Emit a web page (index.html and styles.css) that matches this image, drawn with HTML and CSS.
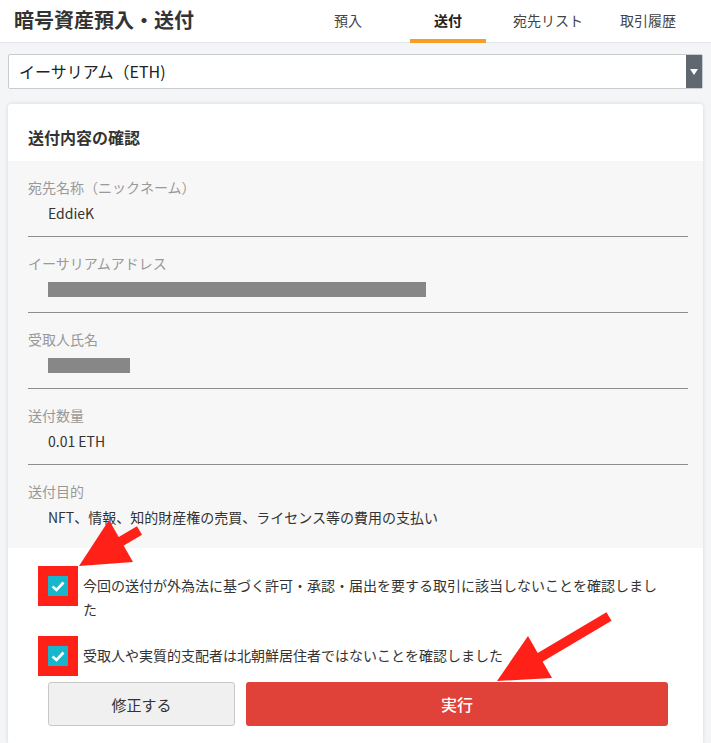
FILE: index.html
```html
<!DOCTYPE html>
<html lang="ja">
<head>
    <meta charset="UTF-8">
    <meta name="viewport" content="width=device-width, initial-scale=1.0">
    <title>暗号資産預入・送付</title>
    <link rel="stylesheet" href="styles.css">
</head>
<body>
<header class="topbar">
    <h1 class="title">暗号資産預入・送付</h1>
    <nav class="tabs">
        <a class="tab">預入</a>
        <a class="tab active">送付</a>
        <a class="tab">宛先リスト</a>
        <a class="tab">取引履歴</a>
    </nav>
</header>

<main class="page">
    <div class="select">
        <span class="select-text">イーサリアム（ETH)</span>
        <span class="select-arrow"></span>
    </div>

    <section class="card">
        <h2 class="card-title">送付内容の確認</h2>
        <div class="details">
            <div class="field">
                <div class="label">宛先名称（ニックネーム）</div>
                <div class="value">EddieK</div>
            </div>
            <div class="field">
                <div class="label">イーサリアムアドレス</div>
                <div class="value"><span class="masked masked-long"></span></div>
            </div>
            <div class="field">
                <div class="label">受取人氏名</div>
                <div class="value"><span class="masked masked-short"></span></div>
            </div>
            <div class="field">
                <div class="label">送付数量</div>
                <div class="value">0.01 ETH</div>
            </div>
            <div class="field">
                <div class="label">送付目的</div>
                <div class="value">NFT、情報、知的財産権の売買、ライセンス等の費用の支払い</div>
            </div>
        </div>

        <div class="confirm">
            <label class="check-row">
                <span class="checkbox"><svg viewBox="0 0 20 20" width="20" height="20"><path d="M4.5 10.5 L8.5 14 L15.5 6.5" fill="none" stroke="#fff" stroke-width="2.6"/></svg></span>
                <span class="check-text">今回の送付が外為法に基づく許可・承認・届出を要する取引に該当しないことを確認しました</span>
            </label>
            <label class="check-row">
                <span class="checkbox"><svg viewBox="0 0 20 20" width="20" height="20"><path d="M4.5 10.5 L8.5 14 L15.5 6.5" fill="none" stroke="#fff" stroke-width="2.6"/></svg></span>
                <span class="check-text">受取人や実質的支配者は北朝鮮居住者ではないことを確認しました</span>
            </label>
            <div class="actions">
                <button class="btn btn-back">修正する</button>
                <button class="btn btn-submit">実行</button>
            </div>
        </div>
    </section>
</main>

<!-- annotation arrows -->
<svg class="arrows" width="711" height="743" viewBox="0 0 711 743">
    <line x1="139.5" y1="530.5" x2="120" y2="542" stroke="#ff2018" stroke-width="10"/>
    <polygon points="79,566 109,520 133,562" fill="#ff2018"/>
    <line x1="609" y1="616.5" x2="539" y2="658" stroke="#ff2018" stroke-width="10"/>
    <polygon points="497,681 528,636 552,678" fill="#ff2018"/>
</svg>
</body>
</html>
```

FILE: styles.css
```css
body {
    margin: 0;
    font-family: "Noto Sans CJK JP", "Noto Sans", sans-serif;
    background-color: #f4f5f7;
    color: #333;
    width: 711px;
    height: 743px;
    overflow: hidden;
    position: relative;
}
.topbar {
    display: flex;
    justify-content: space-between;
    align-items: stretch;
    height: 42px;
    background-color: #fff;
    border-bottom: 1px solid #e3e5e8;
    padding: 0 13px 0 14px;
}
.title {
    margin: 0;
    font-size: 20px;
    font-weight: 700;
    line-height: 40px;
    color: #333;
}
.tabs {
    display: flex;
}
.tab {
    width: 100px;
    text-align: center;
    font-size: 14px;
    line-height: 40px;
    color: #444;
    position: relative;
}
.tab.active {
    font-weight: 700;
    color: #222;
}
.tab.active::after {
    content: "";
    position: absolute;
    left: 12px;
    right: 12px;
    bottom: -1px;
    height: 4px;
    background-color: #f5a024;
}
.page {
    padding: 11px 8px 0;
}
.select {
    display: flex;
    height: 33px;
    background-color: #fff;
    border: 1px solid #c8cbcf;
    border-radius: 2px;
}
.select-text {
    flex: 1;
    font-size: 16px;
    line-height: 33px;
    padding-left: 10px;
    color: #222;
}
.select-arrow {
    width: 16px;
    background-color: #5f6771;
    display: flex;
    align-items: center;
    justify-content: center;
}
.select-arrow::before {
    content: "";
    border-left: 4px solid transparent;
    border-right: 4px solid transparent;
    border-top: 6px solid #fff;
}
.card {
    margin-top: 15px;
    background-color: #fff;
    border-radius: 3px;
    box-shadow: 0 0 4px rgba(0, 0, 0, 0.12);
    height: 640px;
}
.card-title {
    margin: 0;
    padding: 22px 20px 13px;
    font-size: 16px;
    font-weight: 700;
    line-height: 22px;
    color: #333;
}
.details {
    background-color: #f7f7f7;
    padding: 0 15px 8px 20px;
}
.field {
    padding: 16px 0 13px;
    border-bottom: 1px solid #8e8e8e;
}
.field:last-child {
    border-bottom: none;
}
.label {
    font-size: 14px;
    line-height: 20px;
    color: #999;
}
.value {
    padding-left: 20px;
    margin-top: 6px;
    font-size: 14px;
    line-height: 20px;
    color: #333;
    min-height: 20px;
    display: flex;
    align-items: center;
}
.masked {
    display: inline-block;
    height: 15px;
    background-color: #878787;
}
.masked-long {
    width: 378px;
}
.masked-short {
    width: 82px;
}
.confirm {
    padding: 25px 35px 0 40px;
}
.check-row {
    display: flex;
    align-items: flex-start;
    margin-bottom: 22px;
}
.check-row + .check-row {
    margin-bottom: 15px;
}
.checkbox {
    flex: none;
    width: 20px;
    height: 20px;
    margin-top: 3px;
    margin-right: 15px;
    background-color: #17b6cd;
    box-shadow: 0 0 0 10px #ff2018;
}
.checkbox svg {
    display: block;
}
.check-text {
    font-size: 14px;
    line-height: 24px;
    color: #333;
}
.actions {
    display: grid;
    grid-template-columns: 187px 1fr;
    gap: 11px;
}
.btn {
    height: 44px;
    font-family: inherit;
    font-size: 15px;
    border-radius: 3px;
}
.btn-back {
    background-color: #f0f0f0;
    border: 1px solid #c8c8c8;
    color: #333;
}
.btn-submit {
    background-color: #e0423a;
    border: none;
    color: #fff;
    font-size: 16px;
    font-weight: 500;
}
.arrows {
    position: absolute;
    left: 0;
    top: 0;
    pointer-events: none;
}
```
